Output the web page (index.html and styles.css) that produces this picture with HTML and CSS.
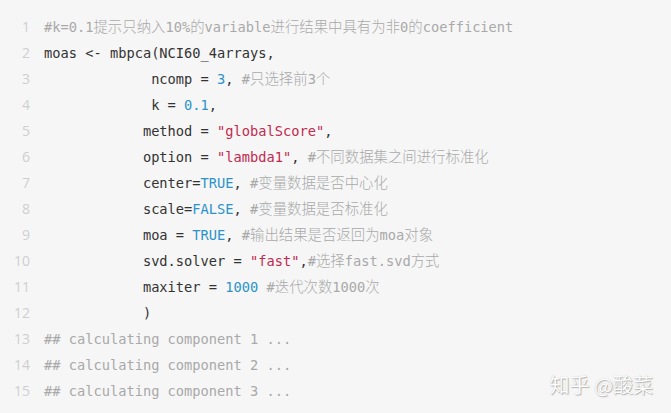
FILE: index.html
```html
<!DOCTYPE html>
<html lang="zh">
<head>
<meta charset="utf-8">
<link rel="stylesheet" href="styles.css">
</head>
<body>
<div class="block">
  <div class="nums">
    <div>1</div><div>2</div><div>3</div><div>4</div><div>5</div>
    <div>6</div><div>7</div><div>8</div><div>9</div><div>10</div>
    <div>11</div><div>12</div><div>13</div><div>14</div><div>15</div>
  </div>
  <pre class="code"><span class="c">#k=0.1<span class="zh">提示只纳入</span>10%<span class="zh">的</span>variable<span class="zh">进行结果中具有为非</span>0<span class="zh">的</span>coefficient</span>
moas &lt;- mbpca(NCI60_4arrays,
             ncomp = <span class="n">3</span>, <span class="c">#<span class="zh">只选择前</span>3<span class="zh">个</span></span>
             k = <span class="n">0.1</span>,
            method = <span class="s">"globalScore"</span>,
            option = <span class="s">"lambda1"</span>, <span class="c">#<span class="zh">不同数据集之间进行标准化</span></span>
            center=<span class="n">TRUE</span>, <span class="c">#<span class="zh">变量数据是否中心化</span></span>
            scale=<span class="n">FALSE</span>, <span class="c">#<span class="zh">变量数据是否标准化</span></span>
            moa = <span class="n">TRUE</span>, <span class="c">#<span class="zh">输出结果是否返回为</span>moa<span class="zh">对象</span></span>
            svd.solver = <span class="s">"fast"</span>,<span class="c">#<span class="zh">选择</span>fast.svd<span class="zh">方式</span></span>
            maxiter = <span class="n">1000</span> <span class="c">#<span class="zh">迭代次数</span>1000<span class="zh">次</span></span>
            )
<span class="c">## calculating component 1 ...</span>
<span class="c">## calculating component 2 ...</span>
<span class="c">## calculating component 3 ...</span></pre>
</div>
<div class="mark">知乎 @酸菜</div>
</body>
</html>
```
FILE: styles.css
```css
html, body {
  margin: 0;
  padding: 0;
  background: #f6f6f6;
  width: 671px;
  height: 413px;
  overflow: hidden;
}
.block {
  display: flex;
  gap: 14px;
  padding: 14px 0 9px 0;
}
.nums {
  width: 30px;
  text-align: right;
  font-family: "Open Sans", "Noto Sans", sans-serif;
  font-size: 14px;
  line-height: 26px;
  color: #cfcfcf;
}
.code {
  margin: 0;
  font-family: "DejaVu Sans Mono", "Noto Sans CJK SC", monospace;
  font-size: 13.7px;
  line-height: 26px;
  color: #333;
  white-space: pre;
}
.zh {
  font-family: "Noto Sans CJK SC", sans-serif;
  font-size: 14.4px;
  font-weight: 300;
  line-height: 1;
}
.c { color: #a9a9a9; }
.n { color: #2b93c9; }
.s { color: #c2294e; }
.mark {
  position: absolute;
  right: 18px;
  bottom: 16px;
  font-family: "Noto Sans CJK SC", sans-serif;
  font-size: 20px;
  line-height: 24px;
  color: #fdfdfd;
  text-shadow: 1px 1px 1px rgba(0,0,0,0.25), 0 0 1px rgba(0,0,0,0.22);
}
```
